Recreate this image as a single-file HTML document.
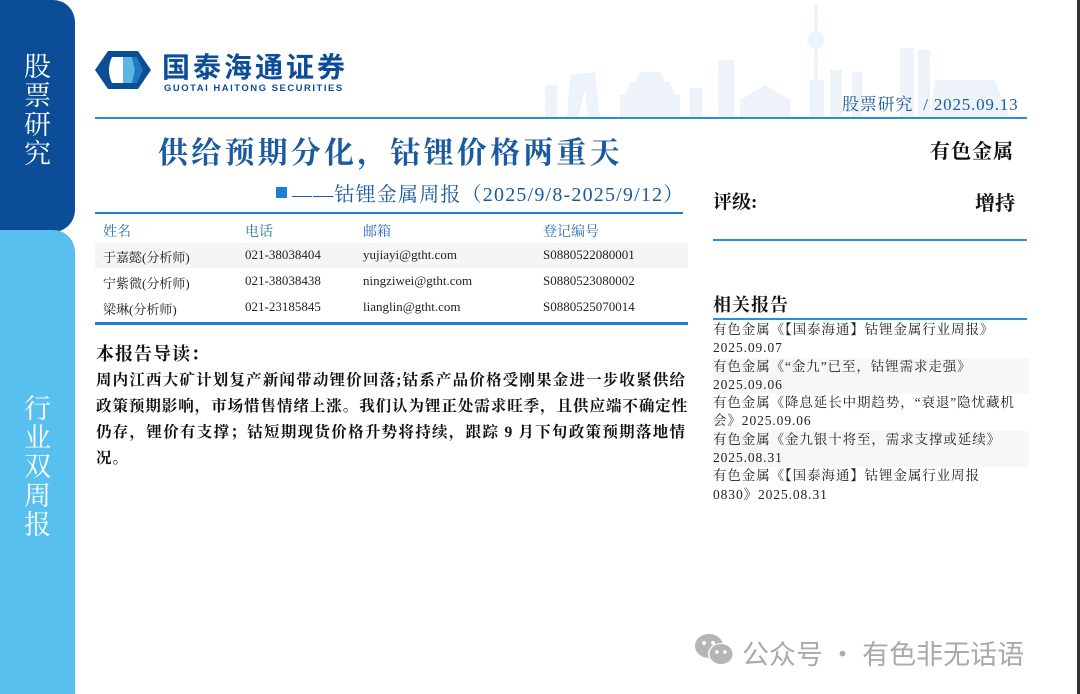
<!DOCTYPE html>
<html><head><meta charset="utf-8"><style>
*{margin:0;padding:0;box-sizing:border-box}
body{width:1080px;height:694px;position:relative;overflow:hidden;background:#fff;font-family:"Liberation Serif","Noto Serif CJK SC",serif;color:#111}
.a{position:absolute;white-space:nowrap}
.side1{position:absolute;left:0;top:0;width:75px;height:232px;background:#0b4e97;border-radius:0 22px 22px 0}
.side2{position:absolute;left:0;top:230px;width:75px;height:464px;background:#57c0ef;border-radius:0 22px 0 0}
.vt{position:absolute;color:#fff;font-size:27px;line-height:29px;width:75px;text-align:center;font-family:"Noto Serif CJK SC",serif}
.tb{font-size:13px;color:#222}
.th{font-size:14px;color:#2a6fb8}
.rel{font-size:13.5px;line-height:18.3px;color:#222;position:absolute;left:713px;width:316px;letter-spacing:0.9px}
.pl{white-space:nowrap;text-align:justify;text-align-last:justify}
</style></head><body>
<div class="side1"></div><div class="side2"></div>
<div class="vt" style="top:50px">股<br>票<br>研<br>究</div>
<div class="vt" style="top:392px">行<br>业<br>双<br>周<br>报</div>
<div style="position:absolute;right:0;top:0;width:3px;height:694px;background:#333"></div>
<svg class="a" style="left:94px;top:50px" width="58" height="40" viewBox="0 0 58 40">
<path d="M14 1 H44 L57 20 L44 39 H14 L1 20 Z" fill="#0b4e97"/>
<path d="M18 7 H29 V33 H18 Q12 20 18 7Z" fill="#fff"/>
<path d="M29 7 H38 L41 20 L38 33 H29Z" fill="#5bb6e6"/>
<path d="M38 7 H43 L49 20 L43 33 H38 L41 20Z" fill="#1e78c2"/>
</svg>
<div class="a" style="left:162px;top:50px;font-size:28px;line-height:32px;font-weight:bold;color:#0b4e97;font-family:'Noto Sans CJK SC',sans-serif;letter-spacing:3px">国泰海通证券</div>
<div class="a" style="left:164px;top:84px;font-size:9.5px;line-height:10px;color:#0b4e97;font-family:'Liberation Sans',sans-serif;font-weight:bold;letter-spacing:1.5px">GUOTAI HAITONG SECURITIES</div>
<svg class="a" style="left:540px;top:0" width="500" height="118"><g fill="#eef3fa">
<rect x="5" y="85" width="12" height="33"/><path d="M30 75 L55 72 L60 118 H48 L45 90 L38 118 H27Z"/>
<path d="M80 95 H140 V118 H80Z M90 82 H130 L135 95 H85Z M100 72 H120 L125 82 H95Z"/>
<rect x="150" y="88" width="12" height="30"/><path d="M178 60 H194 V118 H178Z"/>
<path d="M200 100 L225 85 L250 100 V118 H200Z"/>
<rect x="274" y="5" width="4" height="110"/><circle cx="276" cy="40" r="9"/><rect x="270" y="80" width="14" height="38"/>
<rect x="290" y="70" width="12" height="48"/><rect x="312" y="72" width="10" height="46"/>
<rect x="360" y="48" width="14" height="70"/><rect x="378" y="50" width="12" height="68"/>
<path d="M395 80 L455 80 L470 118 H390Z"/></g></svg>
<div class="a" style="left:842px;top:90px;font-size:17px;color:#1a5aa0;letter-spacing:0.8px">股票研究 &nbsp;/ 2025.09.13</div>
<div class="a" style="left:95px;top:117px;width:932px;height:2px;background:#2c8ddb"></div>
<div class="a" style="left:158px;top:128px;font-size:30px;font-weight:bold;color:#1a5aa0;letter-spacing:3.2px">供给预期分化，钴锂价格两重天</div>
<div class="a" style="left:930px;top:135px;font-size:20px;font-weight:bold;letter-spacing:1px">有色金属</div>
<div class="a" style="left:276px;top:187px;width:11px;height:11px;background:#1e7fd0"></div>
<div class="a" style="left:292px;top:178px;font-size:20px;color:#1a5aa0;letter-spacing:1.2px">——钴锂金属周报（2025/9/8-2025/9/12）</div>
<div class="a" style="left:95px;top:212px;width:588px;height:2px;background:#1e7fd0"></div>
<div class="a" style="left:713px;top:187px;font-size:19px;font-weight:bold">评级:</div>
<div class="a" style="left:975px;top:187px;font-size:20px;font-weight:bold">增持</div>
<div class="a" style="left:713px;top:239px;width:314px;height:2px;background:#2c8ddb"></div>
<div class="a th" style="left:103px;top:221px">姓名</div><div class="a th" style="left:245px;top:221px">电话</div><div class="a th" style="left:363px;top:221px">邮箱</div><div class="a th" style="left:543px;top:221px">登记编号</div>
<div class="a" style="left:95px;top:243px;width:593px;height:25px;background:#f5f5f5"></div>
<div class="a tb" style="left:103px;top:247px">于嘉懿(分析师)</div><div class="a tb" style="left:245px;top:247px">021-38038404</div><div class="a tb" style="left:363px;top:247px">yujiayi@gtht.com</div><div class="a tb" style="left:543px;top:247px">S0880522080001</div>
<div class="a tb" style="left:103px;top:273px">宁紫微(分析师)</div><div class="a tb" style="left:245px;top:273px">021-38038438</div><div class="a tb" style="left:363px;top:273px">ningziwei@gtht.com</div><div class="a tb" style="left:543px;top:273px">S0880523080002</div>
<div class="a tb" style="left:103px;top:299px">梁琳(分析师)</div><div class="a tb" style="left:245px;top:299px">021-23185845</div><div class="a tb" style="left:363px;top:299px">lianglin@gtht.com</div><div class="a tb" style="left:543px;top:299px">S0880525070014</div>
<div class="a" style="left:95px;top:322px;width:593px;height:3px;background:#1e7fd0"></div>
<div class="a" style="left:96px;top:340px;font-size:18px;font-weight:bold;letter-spacing:1px">本报告导读：</div>
<div style="position:absolute;left:96px;top:368px;width:590px;font-size:15.5px;font-weight:bold;line-height:26px;letter-spacing:0.95px">
<div class="pl">周内江西大矿计划复产新闻带动锂价回落;钴系产品价格受刚果金进一步收紧供给</div>
<div class="pl">政策预期影响，市场惜售情绪上涨。我们认为锂正处需求旺季，且供应端不确定性</div>
<div class="pl">仍存，锂价有支撑；钴短期现货价格升势将持续，跟踪 9 月下旬政策预期落地情</div>
<div>况。</div></div>
<div class="a" style="left:713px;top:291px;font-size:18px;font-weight:bold;letter-spacing:1px">相关报告</div>
<div class="a" style="left:713px;top:318px;width:314px;height:2px;background:#2c8ddb"></div>
<div class="rel" style="top:321px">
<div>有色金属《【国泰海通】钴锂金属行业周报》<br>2025.09.07</div>
<div style="background:#f7f7f7">有色金属《“金九”已至，钴锂需求走强》<br>2025.09.06</div>
<div>有色金属《降息延长中期趋势，“衰退”隐忧藏机<br>会》2025.09.06</div>
<div style="background:#f7f7f7">有色金属《金九银十将至，需求支撑或延续》<br>2025.08.31</div>
<div>有色金属《【国泰海通】钴锂金属行业周报<br>0830》2025.08.31</div>
</div>
<svg class="a" style="left:694px;top:633px" width="42" height="34" viewBox="0 0 42 34"><ellipse cx="15" cy="13" rx="14" ry="12" fill="#b5b5b5"/><ellipse cx="27" cy="21" rx="13" ry="11" fill="#fff"/><ellipse cx="27" cy="21" rx="11.5" ry="10" fill="#b5b5b5"/><circle cx="10" cy="10" r="2" fill="#fff"/><circle cx="19" cy="10" r="2" fill="#fff"/><circle cx="23" cy="19" r="1.7" fill="#fff"/><circle cx="31" cy="19" r="1.7" fill="#fff"/></svg>
<div class="a" style="left:742px;top:633px;font-size:27px;color:#aaa;font-family:'Noto Sans CJK SC',sans-serif">公众号 · 有色非无话语</div>
</body></html>
